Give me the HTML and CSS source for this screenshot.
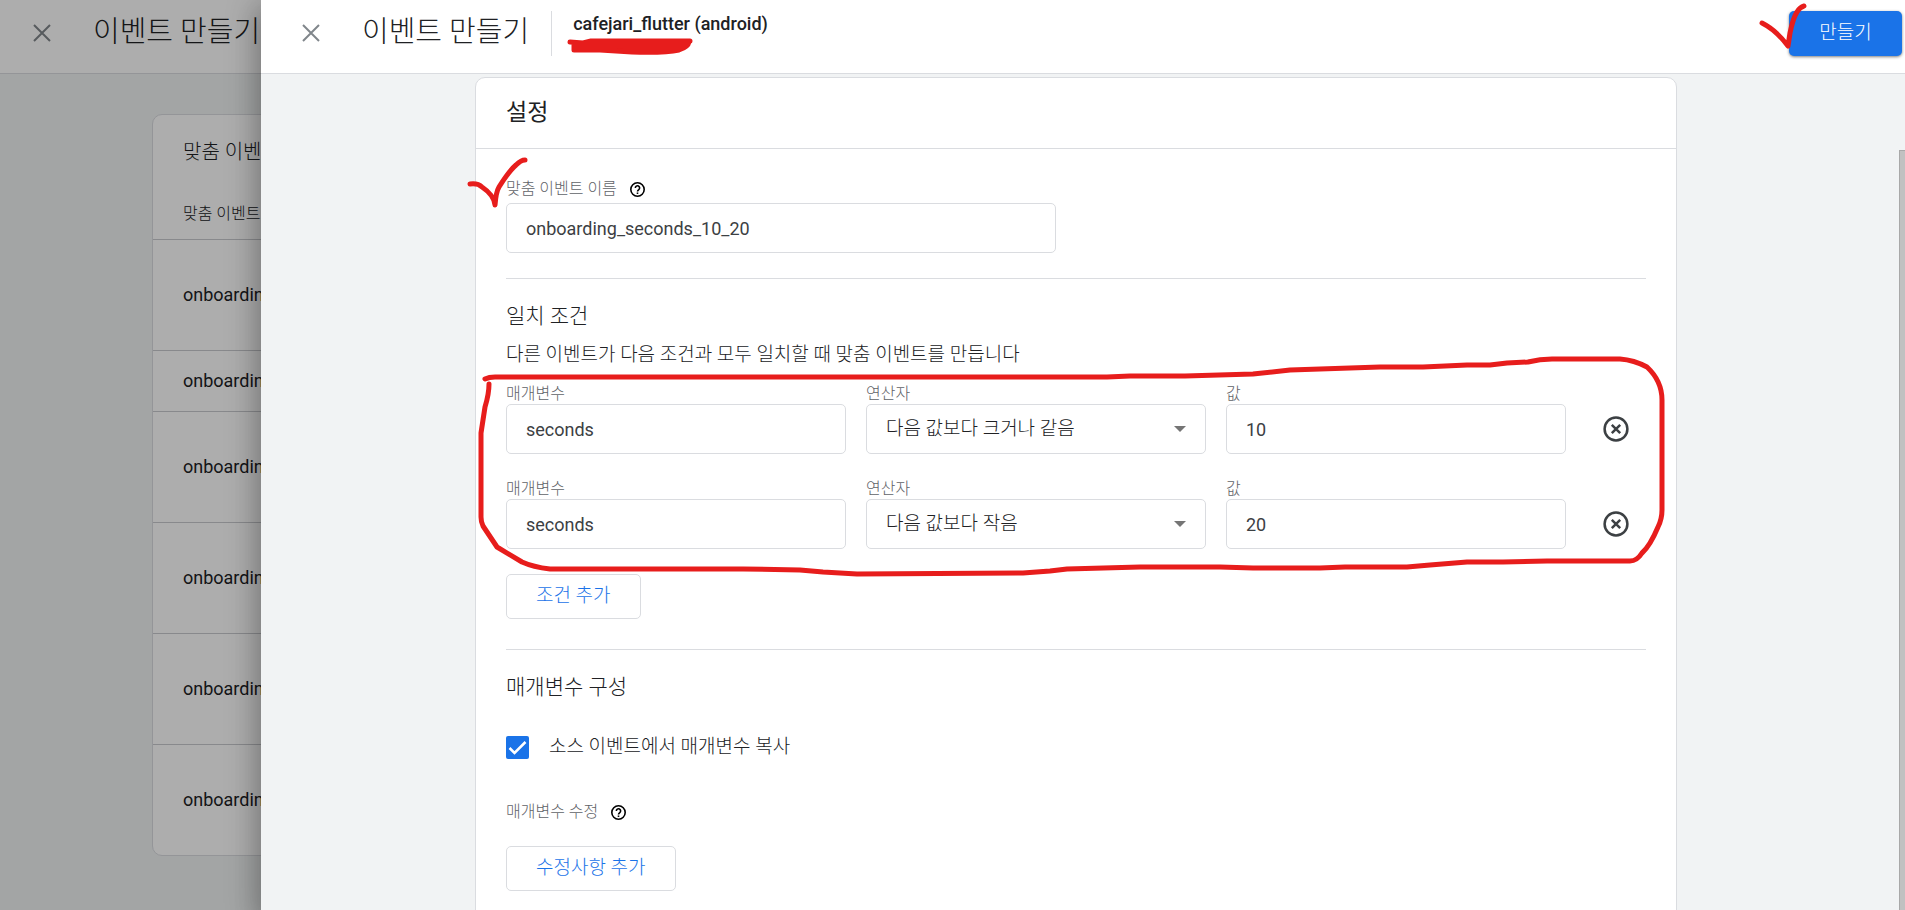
FILE: index.html
```html
<!DOCTYPE html>
<html lang="ko">
<head>
<meta charset="utf-8">
<meta name="viewport" content="width=device-width, initial-scale=1">
<title>이벤트 만들기</title>
<link rel="stylesheet" href="styles.css">
</head>
<body>
<div class="page">
  <header class="bar">
    <button class="close" type="button" aria-label="닫기"><svg viewBox="0 0 18 18"><path d="M1 1l16 16M17 1L1 17"/></svg></button>
    <h1 class="bar-title">이벤트 만들기</h1>
  </header>
  <div class="page-body">
    <section class="list-card">
      <h2 class="list-title">맞춤 이벤트</h2>
      <table class="list">
        <thead><tr><th>맞춤 이벤트 이름</th></tr></thead>
        <tbody>
          <tr><td>onboarding</td></tr>
          <tr class="short"><td>onboarding</td></tr>
          <tr><td>onboarding</td></tr>
          <tr><td>onboarding</td></tr>
          <tr><td>onboarding</td></tr>
          <tr><td>onboarding</td></tr>
        </tbody>
      </table>
    </section>
  </div>
</div>
<div class="scrim"></div>

<main class="drawer">
  <header class="bar">
    <button class="close" type="button" aria-label="닫기"><svg viewBox="0 0 18 18"><path d="M1 1l16 16M17 1L1 17"/></svg></button>
    <h1 class="bar-title">이벤트 만들기</h1>
    <div class="app-name">cafejari_flutter (android)</div>
    <button class="primary" type="button">만들기</button>
  </header>
  <div class="drawer-body">
    <div class="content">
      <form class="card">
        <h2 class="card-title">설정</h2>
        <div class="card-body">
          <section class="section">
            <div class="label-line">
              <label class="label" for="name">맞춤 이벤트 이름</label>
              <svg class="help" viewBox="0 0 16 16"><circle cx="8" cy="8" r="6.3"/><path d="M6 6.6a2 2 0 1 1 3.2 1.5C8.400 8.700 8 9 8 9.800"/><path d="M8 10.800v1.400"/></svg>
            </div>
            <input class="field name-field" id="name" type="text" value="onboarding_seconds_10_20">
          </section>

          <section class="section conditions">
            <h3 class="section-title">일치 조건</h3>
            <p class="hint">다른 이벤트가 다음 조건과 모두 일치할 때 맞춤 이벤트를 만듭니다</p>
            <div class="rows">
              <div class="row">
                <div class="cell"><label class="label" for="p1">매개변수</label><input class="field" id="p1" type="text" value="seconds"></div>
                <div class="cell"><label class="label" for="o1">연산자</label>
                  <div class="select"><select class="field" id="o1"><option>다음 값보다 크거나 같음</option></select><svg class="arrow" viewBox="0 0 12 6"><path d="M0 0h12L6 6z"/></svg></div></div>
                <div class="cell"><label class="label" for="v1">값</label><input class="field" id="v1" type="text" value="10"></div>
                <button class="remove" type="button" aria-label="조건 삭제"><svg viewBox="0 0 26 26"><circle cx="13" cy="13" r="11.400"/><path d="M8.800 8.800l8.400 8.400M17.200 8.800l-8.400 8.400"/></svg></button>
              </div>
              <div class="row">
                <div class="cell"><label class="label" for="p2">매개변수</label><input class="field" id="p2" type="text" value="seconds"></div>
                <div class="cell"><label class="label" for="o2">연산자</label>
                  <div class="select"><select class="field" id="o2"><option>다음 값보다 작음</option></select><svg class="arrow" viewBox="0 0 12 6"><path d="M0 0h12L6 6z"/></svg></div></div>
                <div class="cell"><label class="label" for="v2">값</label><input class="field" id="v2" type="text" value="20"></div>
                <button class="remove" type="button" aria-label="조건 삭제"><svg viewBox="0 0 26 26"><circle cx="13" cy="13" r="11.400"/><path d="M8.800 8.800l8.400 8.400M17.200 8.800l-8.400 8.400"/></svg></button>
              </div>
            </div>
            <button class="outline" type="button">조건 추가</button>
          </section>

          <section class="section params">
            <h3 class="section-title">매개변수 구성</h3>
            <label class="check"><input class="check-box" type="checkbox" checked><svg class="tick" viewBox="0 0 23 23"><path d="M3.500 12l5 5L19.500 6"/></svg><span>소스 이벤트에서 매개변수 복사</span></label>
            <div class="label-line">
              <span class="label">매개변수 수정</span>
              <svg class="help" viewBox="0 0 16 16"><circle cx="8" cy="8" r="6.3"/><path d="M6 6.6a2 2 0 1 1 3.2 1.5C8.400 8.700 8 9 8 9.800"/><path d="M8 10.800v1.400"/></svg>
            </div>
            <button class="outline" type="button">수정사항 추가</button>
          </section>
        </div>
      </form>
    </div>
    <div class="rail"><div class="thumb"></div></div>
  </div>
</main>

<svg class="marks" width="1905" height="910" viewBox="0 0 1905 910" aria-hidden="true">
  <path class="blot" d="M570 42L583 43 591 41H690M574 43V50L600 50 632 52Q665 53 679 50 688 47 689 42M576 46H686M625 49H678"/>
  <path d="M470 184Q478 183 482 187 494 195 495 205 496 192 499 187 509 171 516 165 521 160 525 160"/>
  <path d="M1762 23Q1776 30 1788 46L1790 33Q1793 18 1797 12 1800 7 1804 6"/>
  <path d="M485 379Q489 377 495 377H1107L1130 376 1185 376 1253 374 1290 370 1350 368 1380 367H1423L1467 365H1490L1507 363 1528 362Q1540 359 1552 359H1620Q1634 360 1647 367 1662 381 1662 400V510Q1662 519 1658 527 1650 546 1642 553 1637 561 1630 561H1547L1503 562H1467L1430 565 1407 567H1345L1320 568H1253L1220 567 1140 567 1067 569 1050 571 1023 573 857 574 823 572 800 570 743 569H550Q533 567 522 562L497 547 483 526Q481 522 481 517V433L485 407Q489 394 489 384"/>
</svg>
</body>
</html>
```

FILE: styles.css
```css
* { box-sizing: border-box; }

body {
  margin: 0;
  height: 100vh;
  overflow: hidden;
  position: relative;
  background: #f1f3f4;
  color: #202124;
  font-family: Roboto, "Noto Sans CJK KR", sans-serif;
  font-size: 18px;
  line-height: 24px;
}

h1, h2, h3, p { margin: 0; font-weight: 300; }
button, input, select { font: inherit; color: inherit; }
svg { display: block; fill: none; stroke: currentColor; }

/* Title bars */
.bar {
  display: flex;
  align-items: flex-start;
  height: 74px;
  padding: 11px 3px 0 33px;
  background: #fff;
  border-bottom: 1px solid #dadce0;
}
.close {
  flex: none;
  width: 18px;
  height: 44px;
  margin-right: 42px;
  padding: 0;
  border: 0;
  background: none;
  color: #80868b;
}
.close svg { width: 18px; height: 18px; stroke-width: 2; }
.bar-title { font-size: 29px; line-height: 43px; white-space: nowrap; }
.app-name {
  height: 45px;
  margin-left: 22px;
  padding-left: 21px;
  border-left: 1px solid #dadce0;
  font-size: 18px;
  font-weight: 500;
  line-height: 26px;
}
.primary {
  width: 113px;
  height: 45px;
  margin-left: auto;
  padding: 0 0 2px;
  border: 0;
  border-radius: 5px;
  background: #1a73e8;
  color: #fff;
  font-size: 19px;
  font-weight: 300;
  box-shadow: 0 1px 3px rgba(0, 0, 0, .5);
}

/* Page underneath */
.page { height: 100%; }
.page-body { padding: 40px 152px; }
.list-card {
  border: 1px solid #dadce0;
  border-radius: 10px;
  background: #fff;
}
.list-title { padding: 23px 30px 0; height: 74px; font-size: 20px; line-height: 28px; }
.list { width: 100%; border-collapse: separate; border-spacing: 0; }
.list th {
  height: 50px;
  padding: 0 30px;
  text-align: left;
  font-size: 16px;
  font-weight: 300;
}
.list td { height: 111px; padding: 0 30px; border-top: 1px solid #c9cbce; }
.list .short td { height: 61px; }
.scrim { position: absolute; inset: 0; background: rgba(0, 0, 0, .32); }

/* Drawer */
.drawer {
  position: absolute;
  inset: 0 0 0 261px;
  display: flex;
  flex-direction: column;
  background: #f1f3f4;
  box-shadow: 0 16px 24px 2px rgba(0, 0, 0, .14), 0 6px 30px 5px rgba(0, 0, 0, .22);
}
.drawer > .bar { flex: none; padding-left: 41px; }
.drawer-body { flex: 1; min-height: 0; display: flex; }
.content { flex: 1; padding: 3px 8px 0 0; overflow: hidden; }
.rail { flex: none; width: 6px; padding-top: 76px; }
.thumb { height: 100%; background: #c1c1c1; border: solid #a8a8a8; border-width: 1px 0 0 1px; }

.card {
  max-width: 1202px;
  min-height: 900px;
  margin: 0 auto;
  border: 1px solid #dadce0;
  border-radius: 10px;
  background: #fff;
}
.card-title {
  height: 71px;
  padding: 18px 30px 0;
  border-bottom: 1px solid #dadce0;
  font-size: 23px;
  font-weight: 400;
  line-height: 34px;
}
.card-body { padding: 0 30px; }
.section { padding-bottom: 25px; border-bottom: 1px solid #dadce0; }
.section:first-child { padding-top: 26px; }
.section:last-child { border: 0; }
.conditions, .params { padding-top: 22px; }
.conditions { padding-bottom: 30px; }
.section-title { font-size: 21px; line-height: 30px; }
.hint { margin-top: 10px; font-size: 19px; font-weight: 300; line-height: 28px; }

.label-line { display: flex; align-items: center; gap: 12px; height: 28px; }
.label { color: #5f6368; font-size: 16px; font-weight: 300; line-height: 20px; }
.help { width: 17px; height: 17px; color: #000; stroke-width: 1.500; }

.field {
  display: block;
  width: 100%;
  height: 50px;
  padding: 0 19px;
  border: 1px solid #dadce0;
  border-radius: 5px;
  background: #fff;
  color: #3c4043;
}
.name-field { max-width: 550px; }
.rows { display: grid; gap: 25px; margin-top: 15px; }
.row { display: grid; grid-template-columns: repeat(3, minmax(0, 1fr)) 60px; column-gap: 20px; }
.cell { display: flex; flex-direction: column; }
.select { position: relative; }
select.field { appearance: none; padding-bottom: 1px; font-size: 19px; font-weight: 300; color: #202124; }
.arrow {
  position: absolute;
  right: 20px;
  top: 22px;
  width: 12px;
  height: 6px;
  fill: #757575;
  stroke: none;
}
.remove {
  align-self: end;
  justify-self: center;
  height: 50px;
  padding: 0;
  border: 0;
  background: none;
  color: #3c4043;
}
.remove svg { width: 26px; height: 26px; stroke-width: 2.500; }

.outline {
  height: 45px;
  padding: 0 29px 2px;
  border: 1px solid #dadce0;
  border-radius: 5px;
  background: #fff;
  color: #1a73e8;
  font-size: 19px;
  font-weight: 300;
}
.conditions .outline { display: block; margin-top: 25px; }

.check {
  position: relative;
  display: flex;
  align-items: center;
  gap: 20px;
  margin: 31px 0 37px;
  font-size: 19px;
  font-weight: 300;
  line-height: 28px;
}
.check-box {
  appearance: none;
  width: 23px;
  height: 23px;
  margin: 0;
  border-radius: 2px;
  background: #1a73e8;
}
.tick { position: absolute; left: 0; width: 23px; height: 23px; color: #fff; stroke-width: 2.500; }
.params .outline { margin-top: 20px; }

/* Freehand pen strokes */
.marks {
  position: absolute;
  top: 0;
  left: 0;
  pointer-events: none;
  stroke: #e71d1c;
  stroke-width: 5;
  stroke-linecap: round;
  stroke-linejoin: round;
}
.blot { fill: #e71d1c; }
```
